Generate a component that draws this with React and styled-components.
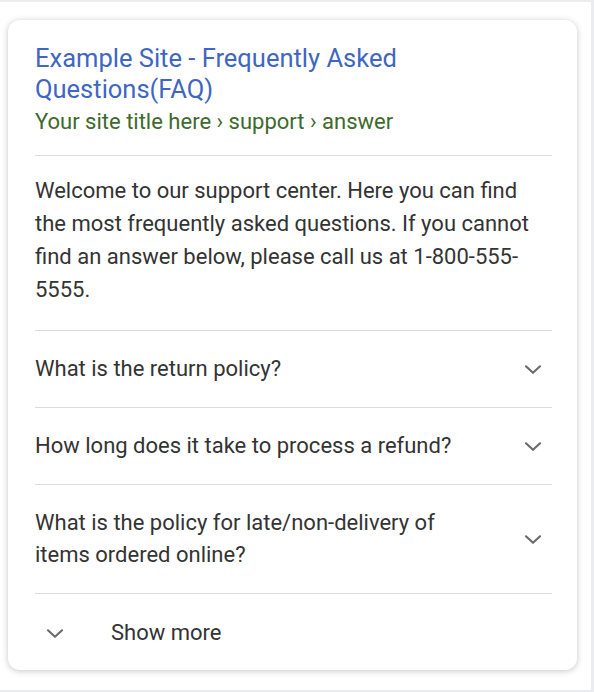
import React from "react";
import styled, { createGlobalStyle } from "styled-components";

const faqs = [
  "What is the return policy?",
  "How long does it take to process a refund?",
  "What is the policy for late/non-delivery of items ordered online?",
];

const intro =
  "Welcome to our support center. Here you can find the most frequently asked questions. If you cannot find an answer below, please call us at 1-800-555-\u200B5555.";

const Chevron = ({ size = 26 }) => (
  <svg width={size} height={size} viewBox="0 0 24 24" fill="none">
    <path
      d="M5.5 9.5l6.5 6 6.5-6"
      stroke="#6b6b6b"
      strokeWidth="2"
      strokeLinecap="round"
      strokeLinejoin="round"
    />
  </svg>
);

const App = () => {
  return (
    <>
      <GlobalStyle />
      <Frame>
        <Card>
          <Header>
            <Title href="#">Example Site - Frequently Asked Questions(FAQ)</Title>
            <Breadcrumb>Your site title here › support › answer</Breadcrumb>
          </Header>
          <Intro>{intro}</Intro>
          {faqs.map((q) => (
            <Question key={q}>
              <QuestionText>{q}</QuestionText>
              <IconSlot>
                <Chevron />
              </IconSlot>
            </Question>
          ))}
          <ShowMore>
            <MoreIcon>
              <Chevron />
            </MoreIcon>
            <span>Show more</span>
          </ShowMore>
        </Card>
      </Frame>
    </>
  );
};

export default App;

const GlobalStyle = createGlobalStyle`
  html, body {
    margin: 0;
    padding: 0;
    background: #fff;
  }
  body {
    font-family: Roboto, "Liberation Sans", Arial, sans-serif;
    -webkit-font-smoothing: antialiased;
  }
`;

const Frame = styled.div`
  box-sizing: border-box;
  width: 594px;
  height: 692px;
  border-top: 2px solid #eaecf0;
  border-right: 3px solid #eaecf0;
  border-bottom: 2px solid #eaecf0;
  padding: 18px 14px 0 8px;
`;

const Card = styled.div`
  background: #fff;
  border-radius: 12px;
  box-shadow: 0 1px 6px rgba(32, 33, 36, 0.26);
  padding: 0 25px 0 27px;
  color: #333;
`;

const Header = styled.div`
  padding: 23px 0 17px;
  border-bottom: 1px solid #dadce0;
`;

const Title = styled.a`
  display: block;
  font-size: 25.5px;
  line-height: 31px;
  color: #3f66c2;
  text-decoration: none;
  padding-right: 120px;
`;

const Breadcrumb = styled.div`
  font-size: 22px;
  line-height: 33px;
  color: #3e6a2c;
`;

const Intro = styled.p`
  margin: 0;
  padding: 18px 0 24px;
  font-size: 22px;
  line-height: 33px;
  border-bottom: 1px solid #dadce0;
`;

const Question = styled.div`
  display: flex;
  align-items: center;
  justify-content: space-between;
  padding: 22px 0;
  border-bottom: 1px solid #dadce0;
`;

const QuestionText = styled.div`
  font-size: 22px;
  line-height: 32px;
  max-width: 440px;
`;

const IconSlot = styled.div`
  display: flex;
  align-items: center;
  justify-content: center;
  width: 26px;
  margin-right: 6px;
`;

const ShowMore = styled.div`
  display: flex;
  align-items: center;
  padding: 23px 0 21px;
  font-size: 22px;
  line-height: 32px;
`;

const MoreIcon = styled.div`
  box-sizing: border-box;
  display: flex;
  align-items: center;
  width: 76px;
  padding-left: 7px;
`;
